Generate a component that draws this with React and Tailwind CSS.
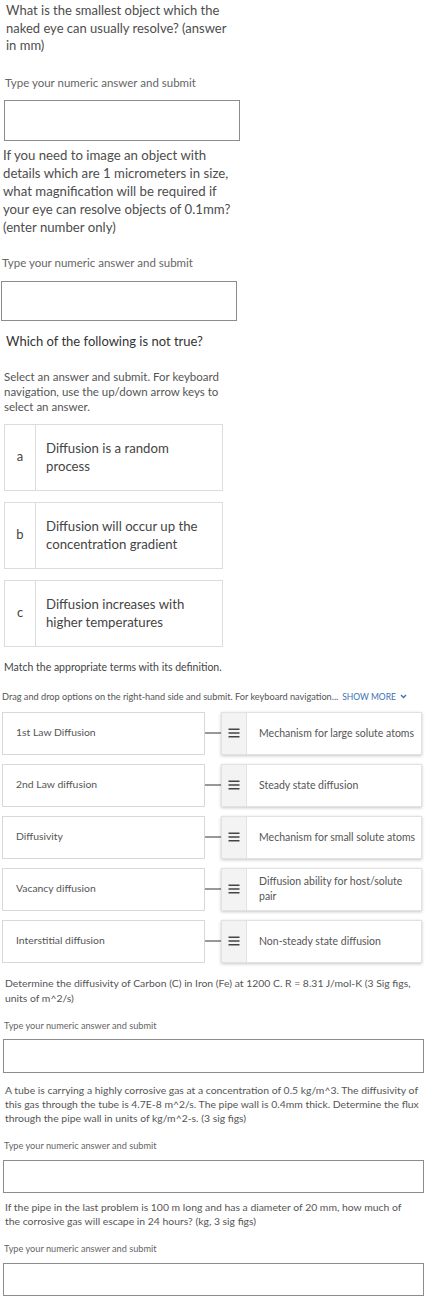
import React from "react";

const pairs = [
  ["1st Law Diffusion", ["Mechanism for large solute atoms"]],
  ["2nd Law diffusion", ["Steady state diffusion"]],
  ["Diffusivity", ["Mechanism for small solute atoms"]],
  ["Vacancy diffusion", ["Diffusion ability for host/solute", "pair"]],
  ["Interstitial diffusion", ["Non-steady state diffusion"]],
];

const options = [
  ["a", ["Diffusion is a random", "process"]],
  ["b", ["Diffusion will occur up the", "concentration gradient"]],
  ["c", ["Diffusion increases with", "higher temperatures"]],
];

function Lines({ lines }) {
  return lines.map((l, i) => (
    <span key={i} className="block whitespace-nowrap">
      {l}
    </span>
  ));
}

function HandleIcon() {
  return (
    <svg width="12" height="10" viewBox="0 0 12 10">
      <rect x="0.5" y="0.5" width="11" height="1.5" fill="#444" />
      <rect x="0.5" y="4.25" width="11" height="1.5" fill="#444" />
      <rect x="0.5" y="8" width="11" height="1.5" fill="#444" />
    </svg>
  );
}

export default function App() {
  return (
    <div className="w-[431px] min-h-[1303px] bg-white font-['Lato',sans-serif] text-[#555]">
      {/* QUESTION 1 */}
      <div className="pt-[2px]">
        <p className="ml-[6px] text-[13px] leading-[17.5px] text-[#4d4d4d]">
          <Lines lines={["What is the smallest object which the", "naked eye can usually resolve? (answer", "in mm)"]} />
        </p>
        <p className="ml-[5px] mt-[21px] text-[11.5px] leading-[14px] text-[#666]">Type your numeric answer and submit</p>
        <div className="ml-[4px] mt-[10px] w-[236px] h-[41px] border border-[#8c8c8c]" />
      </div>

      {/* QUESTION 2 */}
      <div>
        <p className="ml-[3px] mt-[5px] text-[13.2px] leading-[18px] text-[#4d4d4d]">
          <Lines
            lines={[
              "If you need to image an object with",
              "details which are 1 micrometers in size,",
              "what magnification will be required if",
              "your eye can resolve objects of 0.1mm?",
              "(enter number only)",
            ]}
          />
        </p>
        <p className="ml-[2px] mt-[20px] text-[11.5px] leading-[14px] text-[#666]">Type your numeric answer and submit</p>
        <div className="ml-[1px] mt-[11px] w-[236px] h-[40px] border border-[#8c8c8c]" />
      </div>

      {/* QUESTION 3 */}
      <div>
        <p className="ml-[6px] mt-[11px] text-[13px] leading-[18px] text-[#333]">Which of the following is not true?</p>
        <p className="ml-[4px] mt-[19.5px] text-[11.5px] leading-[15px] text-[#555]">
          <Lines
            lines={[
              "Select an answer and submit. For keyboard",
              "navigation, use the up/down arrow keys to",
              "select an answer.",
            ]}
          />
        </p>
        <div className="ml-[4px] mt-[9.5px] w-[219px] flex flex-col gap-[11px]">
          {options.map(([k, lines]) => (
            <div key={k} className="flex h-[67px] border border-[#dcdcdc]">
              <div className="w-[31px] flex items-center justify-center border-r border-[#dcdcdc] text-[13px] text-[#444]">
                {k}
              </div>
              <div className="flex flex-col justify-center pl-[10px] text-[13.2px] leading-[18.5px] text-[#444]">
                <Lines lines={lines} />
              </div>
            </div>
          ))}
        </div>
      </div>

      {/* QUESTION 4 */}
      <div>
        <p className="ml-[4px] mt-[13px] text-[10.5px] leading-[14px] text-[#444]">
          Match the appropriate terms with its definition.
        </p>
        <p className="ml-[2px] mt-[17px] text-[9.2px] leading-[12px] text-[#555] whitespace-nowrap flex items-center">
          Drag and drop options on the right-hand side and submit. For keyboard navigation...
          <span className="ml-[4px] text-[#3a6fb5] text-[8.5px]">SHOW MORE</span>
          <svg className="ml-[4px]" width="7" height="5" viewBox="0 0 7 5">
            <path d="M1 1 L3.5 3.5 L6 1" stroke="#3a6fb5" strokeWidth="1.3" fill="none" />
          </svg>
        </p>
        <div className="mt-[9px] flex flex-col gap-[9px]">
          {pairs.map(([left, right]) => (
            <div key={left} className="flex items-center h-[43px]">
              <div className="ml-[2px] w-[203px] h-full flex items-center pl-[13px] border border-[#d8d8d8] text-[10.4px] text-[#555]">
                {left}
              </div>
              <div className="w-[16px] h-[2px] bg-[#999]" />
              <div className="w-[201px] h-full flex border border-[#e2e2e2] shadow-[0_1px_3px_rgba(0,0,0,0.22)]">
                <div className="w-[25px] bg-[#f3f3f3] border-r border-[#e2e2e2] flex items-center justify-center">
                  <HandleIcon />
                </div>
                <div className="flex flex-col justify-center pl-[12px] text-[10.5px] leading-[15px] text-[#555]">
                  <Lines lines={right} />
                </div>
              </div>
            </div>
          ))}
        </div>
      </div>

      {/* QUESTION 5 */}
      <div>
        <p className="ml-[5px] mt-[13.5px] text-[10.4px] leading-[14.5px] text-[#555]">
          <Lines
            lines={[
              "Determine the diffusivity of Carbon (C) in Iron (Fe) at 1200 C. R = 8.31 J/mol-K (3 Sig figs,",
              "units of m^2/s)",
            ]}
          />
        </p>
        <p className="ml-[4px] mt-[15px] text-[9.2px] leading-[12px] text-[#666]">Type your numeric answer and submit</p>
        <div className="ml-[3px] mt-[7px] w-[421px] h-[34px] border border-[#8c8c8c]" />
      </div>

      {/* QUESTION 6 */}
      <div>
        <p className="ml-[5px] mt-[10px] text-[10.4px] leading-[14px] text-[#555]">
          <Lines
            lines={[
              "A tube is carrying a highly corrosive gas at a concentration of 0.5 kg/m^3. The diffusivity of",
              "this gas through the tube is 4.7E-8 m^2/s. The pipe wall is 0.4mm thick. Determine the flux",
              "through the pipe wall in units of kg/m^2-s. (3 sig figs)",
            ]}
          />
        </p>
        <p className="ml-[4px] mt-[15px] text-[9.2px] leading-[12px] text-[#666]">Type your numeric answer and submit</p>
        <div className="ml-[3px] mt-[8px] w-[421px] h-[33px] border border-[#8c8c8c]" />
      </div>

      {/* QUESTION 7 */}
      <div>
        <p className="ml-[5px] mt-[7px] text-[10.4px] leading-[14px] text-[#555]">
          <Lines
            lines={[
              "If the pipe in the last problem is 100 m long and has a diameter of 20 mm, how much of",
              "the corrosive gas will escape in 24 hours? (kg, 3 sig figs)",
            ]}
          />
        </p>
        <p className="ml-[4px] mt-[15px] text-[9.2px] leading-[12px] text-[#666]">Type your numeric answer and submit</p>
        <div className="ml-[3px] mt-[8px] w-[421px] h-[33px] border border-[#8c8c8c]" />
      </div>
    </div>
  );
}
